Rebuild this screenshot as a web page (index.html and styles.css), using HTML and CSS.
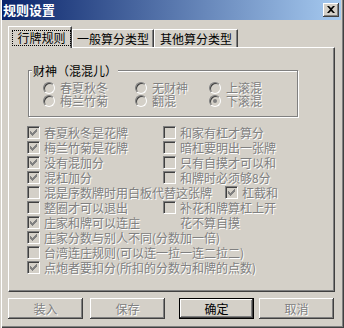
FILE: index.html
```html
<!DOCTYPE html>
<html>
<head>
<meta charset="utf-8">
<link rel="stylesheet" href="styles.css">
</head>
<body>
<div class="window">
  <div class="titlebar">
    <span class="title">规则设置</span>
    <span class="close"><svg width="8" height="7" viewBox="0 0 8 7"><path d="M0 0h2l2 2 2-2h2L5 3.5 8 7H6L4 5 2 7H0l3-3.5z" fill="#000"/></svg></span>
  </div>
  <div class="tabs">
    <div class="tab active"><span class="focus">行牌规则</span></div>
    <div class="tab">一般算分类型</div>
    <div class="tab t3">其他算分类型</div>
  </div>
  <div class="panel">
    <div class="group">
      <span class="caption">财神（混混儿）</span>
      <div class="radios">
        <span class="opt"><span class="radio"></span>春夏秋冬</span>
        <span class="opt"><span class="radio"></span>无财神</span>
        <span class="opt"><span class="radio"></span>上滚混</span>
        <span class="opt"><span class="radio"></span>梅兰竹菊</span>
        <span class="opt"><span class="radio"></span>翻混</span>
        <span class="opt"><span class="radio on"></span>下滚混</span>
      </div>
    </div>
    <div class="checks">
      <span class="chk"><span class="box on"><svg width="7" height="7"><rect x="0" y="2" width="1" height="3"/><rect x="1" y="3" width="1" height="3"/><rect x="2" y="4" width="1" height="3"/><rect x="3" y="3" width="1" height="3"/><rect x="4" y="2" width="1" height="3"/><rect x="5" y="1" width="1" height="3"/><rect x="6" y="0" width="1" height="3"/></svg></span>春夏秋冬是花牌</span>
      <span class="chk"><span class="box"></span>和家有杠才算分</span>
      <span class="chk"><span class="box on"><svg width="7" height="7"><rect x="0" y="2" width="1" height="3"/><rect x="1" y="3" width="1" height="3"/><rect x="2" y="4" width="1" height="3"/><rect x="3" y="3" width="1" height="3"/><rect x="4" y="2" width="1" height="3"/><rect x="5" y="1" width="1" height="3"/><rect x="6" y="0" width="1" height="3"/></svg></span>梅兰竹菊是花牌</span>
      <span class="chk"><span class="box"></span>暗杠要明出一张牌</span>
      <span class="chk"><span class="box on"><svg width="7" height="7"><rect x="0" y="2" width="1" height="3"/><rect x="1" y="3" width="1" height="3"/><rect x="2" y="4" width="1" height="3"/><rect x="3" y="3" width="1" height="3"/><rect x="4" y="2" width="1" height="3"/><rect x="5" y="1" width="1" height="3"/><rect x="6" y="0" width="1" height="3"/></svg></span>没有混加分</span>
      <span class="chk"><span class="box"></span>只有自摸才可以和</span>
      <span class="chk"><span class="box on"><svg width="7" height="7"><rect x="0" y="2" width="1" height="3"/><rect x="1" y="3" width="1" height="3"/><rect x="2" y="4" width="1" height="3"/><rect x="3" y="3" width="1" height="3"/><rect x="4" y="2" width="1" height="3"/><rect x="5" y="1" width="1" height="3"/><rect x="6" y="0" width="1" height="3"/></svg></span>混杠加分</span>
      <span class="chk"><span class="box"></span>和牌时必须够8分</span>
      <div class="wide row">
        <span class="chk"><span class="box"></span>混是序数牌时用白板代替这张牌</span>
        <span class="chk gap"><span class="box on"><svg width="7" height="7"><rect x="0" y="2" width="1" height="3"/><rect x="1" y="3" width="1" height="3"/><rect x="2" y="4" width="1" height="3"/><rect x="3" y="3" width="1" height="3"/><rect x="4" y="2" width="1" height="3"/><rect x="5" y="1" width="1" height="3"/><rect x="6" y="0" width="1" height="3"/></svg></span>杠截和</span>
      </div>
      <span class="chk"><span class="box"></span>整圈才可以退出</span>
      <span class="chk tall"><span class="box"></span><span>补花和牌算杠上开<br>花不算自摸</span></span>
      <span class="chk"><span class="box on"><svg width="7" height="7"><rect x="0" y="2" width="1" height="3"/><rect x="1" y="3" width="1" height="3"/><rect x="2" y="4" width="1" height="3"/><rect x="3" y="3" width="1" height="3"/><rect x="4" y="2" width="1" height="3"/><rect x="5" y="1" width="1" height="3"/><rect x="6" y="0" width="1" height="3"/></svg></span>庄家和牌可以连庄</span>
      <span class="chk wide"><span class="box on"><svg width="7" height="7"><rect x="0" y="2" width="1" height="3"/><rect x="1" y="3" width="1" height="3"/><rect x="2" y="4" width="1" height="3"/><rect x="3" y="3" width="1" height="3"/><rect x="4" y="2" width="1" height="3"/><rect x="5" y="1" width="1" height="3"/><rect x="6" y="0" width="1" height="3"/></svg></span>庄家分数与别人不同(分数加一倍)</span>
      <span class="chk wide"><span class="box"></span>台湾连庄规则(可以连一拉一连二拉二)</span>
      <span class="chk wide"><span class="box on"><svg width="7" height="7"><rect x="0" y="2" width="1" height="3"/><rect x="1" y="3" width="1" height="3"/><rect x="2" y="4" width="1" height="3"/><rect x="3" y="3" width="1" height="3"/><rect x="4" y="2" width="1" height="3"/><rect x="5" y="1" width="1" height="3"/><rect x="6" y="0" width="1" height="3"/></svg></span>点炮者要扣分(所扣的分数为和牌的点数)</span>
    </div>
  </div>
  <div class="buttons">
    <span class="btn">装入</span>
    <span class="btn">保存</span>
    <span class="btn default">确定</span>
    <span class="btn last">取消</span>
  </div>
</div>
</body>
</html>
```
FILE: styles.css
```css
* { box-sizing: border-box; }
body {
  margin: 0;
  background: #d4d0c8;
  font: 12px/15px "Noto Sans CJK SC", "Noto Sans", sans-serif;
  color: #000;
}
.window {
  width: 344px;
  height: 328px;
  background: #d4d0c8;
  padding: 0 3px 3px 2px;
  box-shadow: inset 1px 0 #d4d0c8, inset 2px 0 #fff, inset -1px -1px #404040, inset -2px -2px #808080;
}
.titlebar {
  height: 20px;
  display: flex;
  align-items: center;
  justify-content: space-between;
  padding: 0 2px 0 1px;
  background: linear-gradient(to right, #0a246a, #a6caf0);
}
.title {
  color: #fff;
  font-weight: bold;
  font-size: 13px;
  line-height: 20px;
}
.close {
  width: 16px;
  height: 14px;
  background: #d4d0c8;
  box-shadow: inset -1px -1px #404040, inset 1px 1px #fff, inset -2px -2px #808080;
  display: flex;
  align-items: center;
  justify-content: center;
  padding: 0 1px 1px 0;
}
.close svg { display: block; }
.tabs {
  display: flex;
  align-items: flex-end;
  height: 21px;
  margin: 6px 0 0 6px;
}
.tab {
  height: 18px;
  padding: 0 4px;
  border-top: 1px solid #fff;
  border-left: 1px solid #fff;
  border-right: 1px solid #404040;
  box-shadow: inset -1px 0 #808080;
  line-height: 17px;
  white-space: nowrap;
}
.tab.t3 { padding: 0 5px; }
.tab.active {
  height: 22px;
  margin-bottom: -1px;
  position: relative;
  z-index: 1;
  background: #d4d0c8;
  padding: 3px 0 0 3px;
}
.focus {
  display: block;
  width: 59px;
  height: 16px;
  border: 1px dotted #000;
  text-align: center;
  line-height: 14px;
}
.panel {
  height: 245px;
  margin: 0 6px;
  border: 1px solid;
  border-color: #fff #404040 #404040 #fff;
  box-shadow: inset -1px -1px #808080;
  padding-top: 22px;
}
.group {
  position: relative;
  width: 270px;
  height: 47px;
  margin-left: 19px;
  border: 1px solid #808080;
  box-shadow: inset 1px 1px #fff, 1px 1px #fff;
  padding: 10px 0 0 14px;
}
.caption {
  position: absolute;
  top: -8px;
  left: 3px;
  padding: 0 1px;
  background: #d4d0c8;
  line-height: 15px;
}
.radios {
  display: grid;
  grid-template-columns: 92px 74px auto;
  grid-auto-rows: 13px;
}
.opt {
  display: flex;
  align-items: center;
  gap: 5px;
  line-height: 13px;
  color: #808080;
  text-shadow: 1px 1px 0 #fff;
  white-space: nowrap;
}
.radio {
  position: relative;
  flex: none;
  width: 12px;
  height: 12px;
  border-radius: 50%;
  border: 1px solid;
  border-color: #808080 #fff #fff #808080;
  box-shadow: inset 1px 1px #404040, inset -1px -1px #d4d0c8;
  background: #d4d0c8;
}
.radio.on::after {
  content: "";
  position: absolute;
  left: 3px;
  top: 3px;
  width: 4px;
  height: 4px;
  border-radius: 50%;
  background: #808080;
}
.checks {
  display: grid;
  grid-template-columns: 136px auto;
  grid-auto-rows: 15px;
  margin: 8px 0 0 18px;
}
.chk {
  display: flex;
  align-items: flex-start;
  color: #808080;
  text-shadow: 1px 1px 0 #fff;
  white-space: nowrap;
  line-height: 15px;
}
.box {
  flex: none;
  width: 13px;
  height: 13px;
  margin: 1px 4px 0 0;
  border: 1px solid;
  border-color: #808080 #fff #fff #808080;
  box-shadow: inset 1px 1px #404040, inset -1px -1px #d4d0c8;
  background: #d4d0c8;
  display: flex;
  align-items: center;
  justify-content: center;
}
.box svg { display: block; fill: #808080; }
.wide { grid-column: 1 / span 2; }
.tall { grid-row: span 2; }
.row { display: flex; }
.gap { margin-left: 13px; }
.buttons {
  display: flex;
  margin: 6px 0 0 6px;
}
.btn {
  width: 75px;
  height: 21px;
  display: flex;
  align-items: center;
  justify-content: center;
  padding-bottom: 1px;
  box-shadow: inset -1px -1px #404040, inset 1px 1px #fff, inset -2px -2px #808080;
  color: #808080;
  text-shadow: 1px 1px 0 #fff;
  line-height: 15px;
}
.btn + .btn { margin-left: 7px; }
.btn.default {
  margin-left: 14px;
  border: 1px solid #000;
  color: #000;
  text-shadow: none;
}
.btn.last { margin-left: 5px; }
```
